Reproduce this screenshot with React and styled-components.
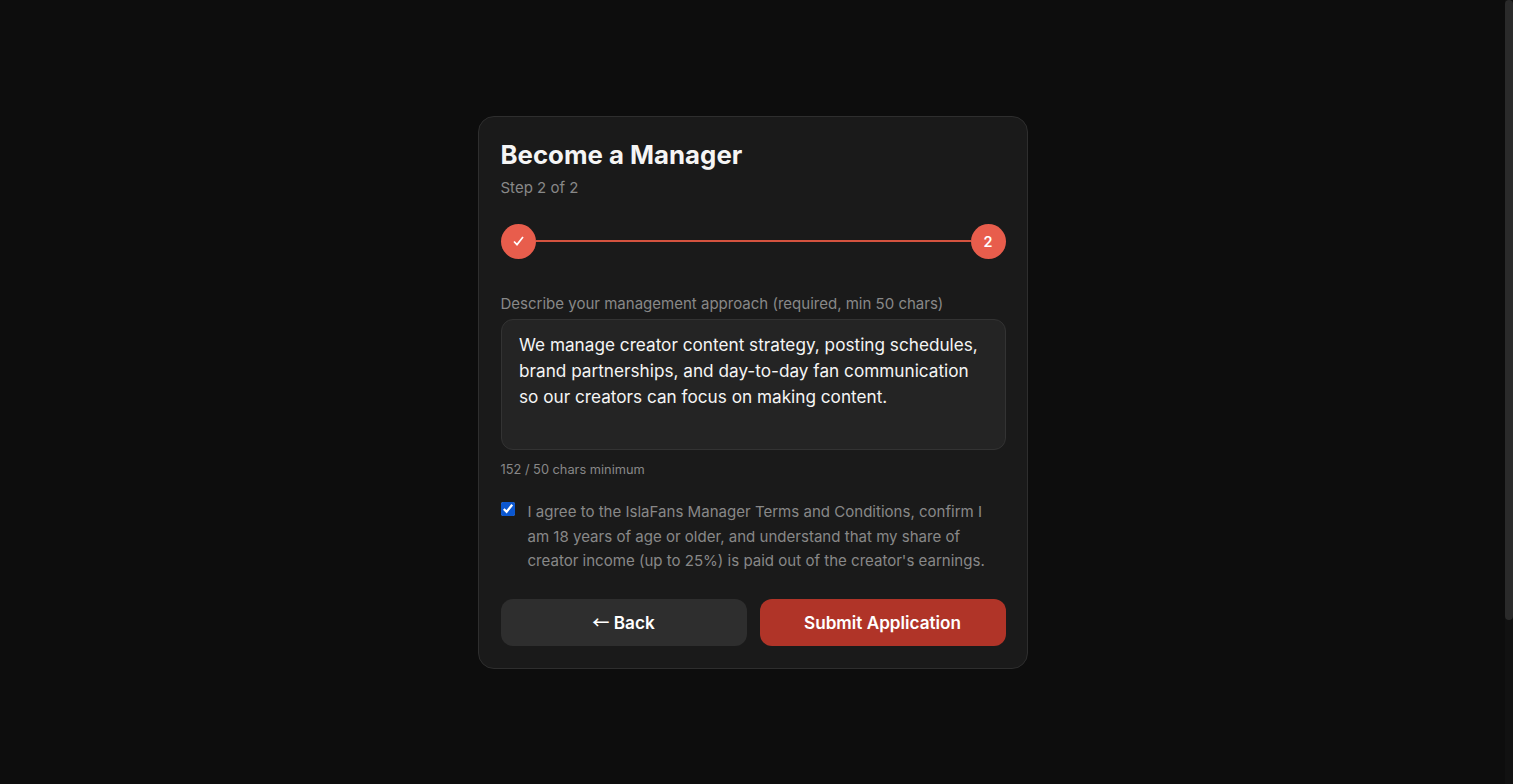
import React, {useState} from "react";
import styled, {createGlobalStyle} from "styled-components";

const Global = createGlobalStyle`
  * { box-sizing: border-box; }
  html { background: #0d0d0d; }
  body {
    margin: 0;
    background: #0d0d0d;
    font-family: Inter, "Noto Sans", sans-serif;
    color: #f5f5f5;
  }
`;

const Page = styled.main`
  min-height: 100vh;
  display: flex;
  align-items: center;
  justify-content: center;
  padding: 25px 8px 24px 0;
`;
const Track = styled.div`
  position: fixed;
  top: 0;
  right: 0;
  bottom: 0;
  width: 8px;
  background: #111111;
`;
const Thumb = styled.div`
  height: 620px;
  border-radius: 4px;
  background: #2a2a2a;
`;
const Card = styled.section`
  width: 550px;
  background: #1a1a1a;
  border: 1px solid #2e2e2e;
  border-radius: 16px;
  padding: 22px 21px 22px 22px;
`;
const Title = styled.h1`
  margin: 0;
  font-size: 25.8px;
  line-height: 32px;
  font-weight: 700;
  color: #f5f5f5;
`;
const Sub = styled.p`
  margin: 7px 0 0;
  font-size: 15px;
  line-height: 20px;
  color: #888888;
`;
const Steps = styled.div`
  display: flex;
  align-items: center;
  margin: 26px 0 35px;
`;
const Dot = styled.div`
  width: 35px;
  height: 35px;
  border-radius: 50%;
  background: #e85d4c;
  color: #ffffff;
  display: grid;
  place-items: center;
  font-size: 14.4px;
  font-weight: 600;
  flex: none;
`;
const Line = styled.div`
  flex: 1;
  height: 2px;
  background: #d4533f;
`;
const Label = styled.label`
  display: block;
  font-size: 15.03px;
  line-height: 20px;
  color: #888888;
  margin-bottom: 5px;
`;
const Area = styled.textarea`
  display: block;
  width: 100%;
  height: 131px;
  padding: 12px 17.5px;
  background: #242424;
  border: 1px solid #333333;
  border-radius: 12px;
  color: #f5f5f5;
  font-family: inherit;
  font-size: 17.2px;
  line-height: 26px;
  resize: none;
  outline: none;
`;
const Hint = styled.div`
  margin-top: 11px;
  font-size: 12.8px;
  line-height: 18px;
  color: #888888;
`;
const Agree = styled.label`
  display: flex;
  align-items: flex-start;
  gap: 13px;
  margin-top: 21.4px;
  font-size: 15.05px;
  line-height: 24.5px;
  color: #888888;
`;
const Check = styled.input`
  width: 14px;
  height: 14px;
  margin: 2px 0 0;
  flex: none;
  accent-color: #0b57d0;
`;
const Actions = styled.div`
  display: grid;
  grid-template-columns: 1fr 1fr;
  gap: 13px;
  margin-top: 25.6px;
`;
const Button = styled.button`
  height: 47px;
  border: none;
  border-radius: 12px;
  background: ${(p) => (p.$primary ? "#b03428" : "#2e2e2e")};
  color: #ffffff;
  font-family: inherit;
  font-size: 17.15px;
  font-weight: 600;
`;
const Arrow = styled.span`
  font-family: "Noto Sans CJK SC", sans-serif;
  font-weight: 500;
  line-height: 1;
`;

const text =
  "We manage creator content strategy, posting schedules, brand partnerships, and day-to-day fan communication so our creators can focus on making content.";

export default function App() {
  const [value, setValue] = useState(text);
  const [agreed, setAgreed] = useState(true);
  return (
    <>
      <Global />
      <Page>
        <Card>
          <Title>Become a Manager</Title>
          <Sub>Step 2 of 2</Sub>
          <Steps>
            <Dot>
              <svg width="11" height="10" viewBox="0 0 11 10" fill="none" stroke="#fff" strokeWidth="1.7">
                <path d="M1 5.5 L4 8.6 L10 1" />
              </svg>
            </Dot>
            <Line />
            <Dot>2</Dot>
          </Steps>
          <Label htmlFor="approach">Describe your management approach (required, min 50 chars)</Label>
          <Area id="approach" value={value} onChange={(e) => setValue(e.target.value)} />
          <Hint>152 / 50 chars minimum</Hint>
          <Agree>
            <Check type="checkbox" checked={agreed} onChange={(e) => setAgreed(e.target.checked)} />
            <span>
              I agree to the IslaFans Manager Terms and Conditions, confirm I am 18 years of age or older, and understand that my share of creator income (up to 25%) is paid out of the creator's earnings.
            </span>
          </Agree>
          <Actions>
            <Button><Arrow>←</Arrow> Back</Button>
            <Button $primary>Submit Application</Button>
          </Actions>
        </Card>
      </Page>
      <Track><Thumb /></Track>
    </>
  );
}
